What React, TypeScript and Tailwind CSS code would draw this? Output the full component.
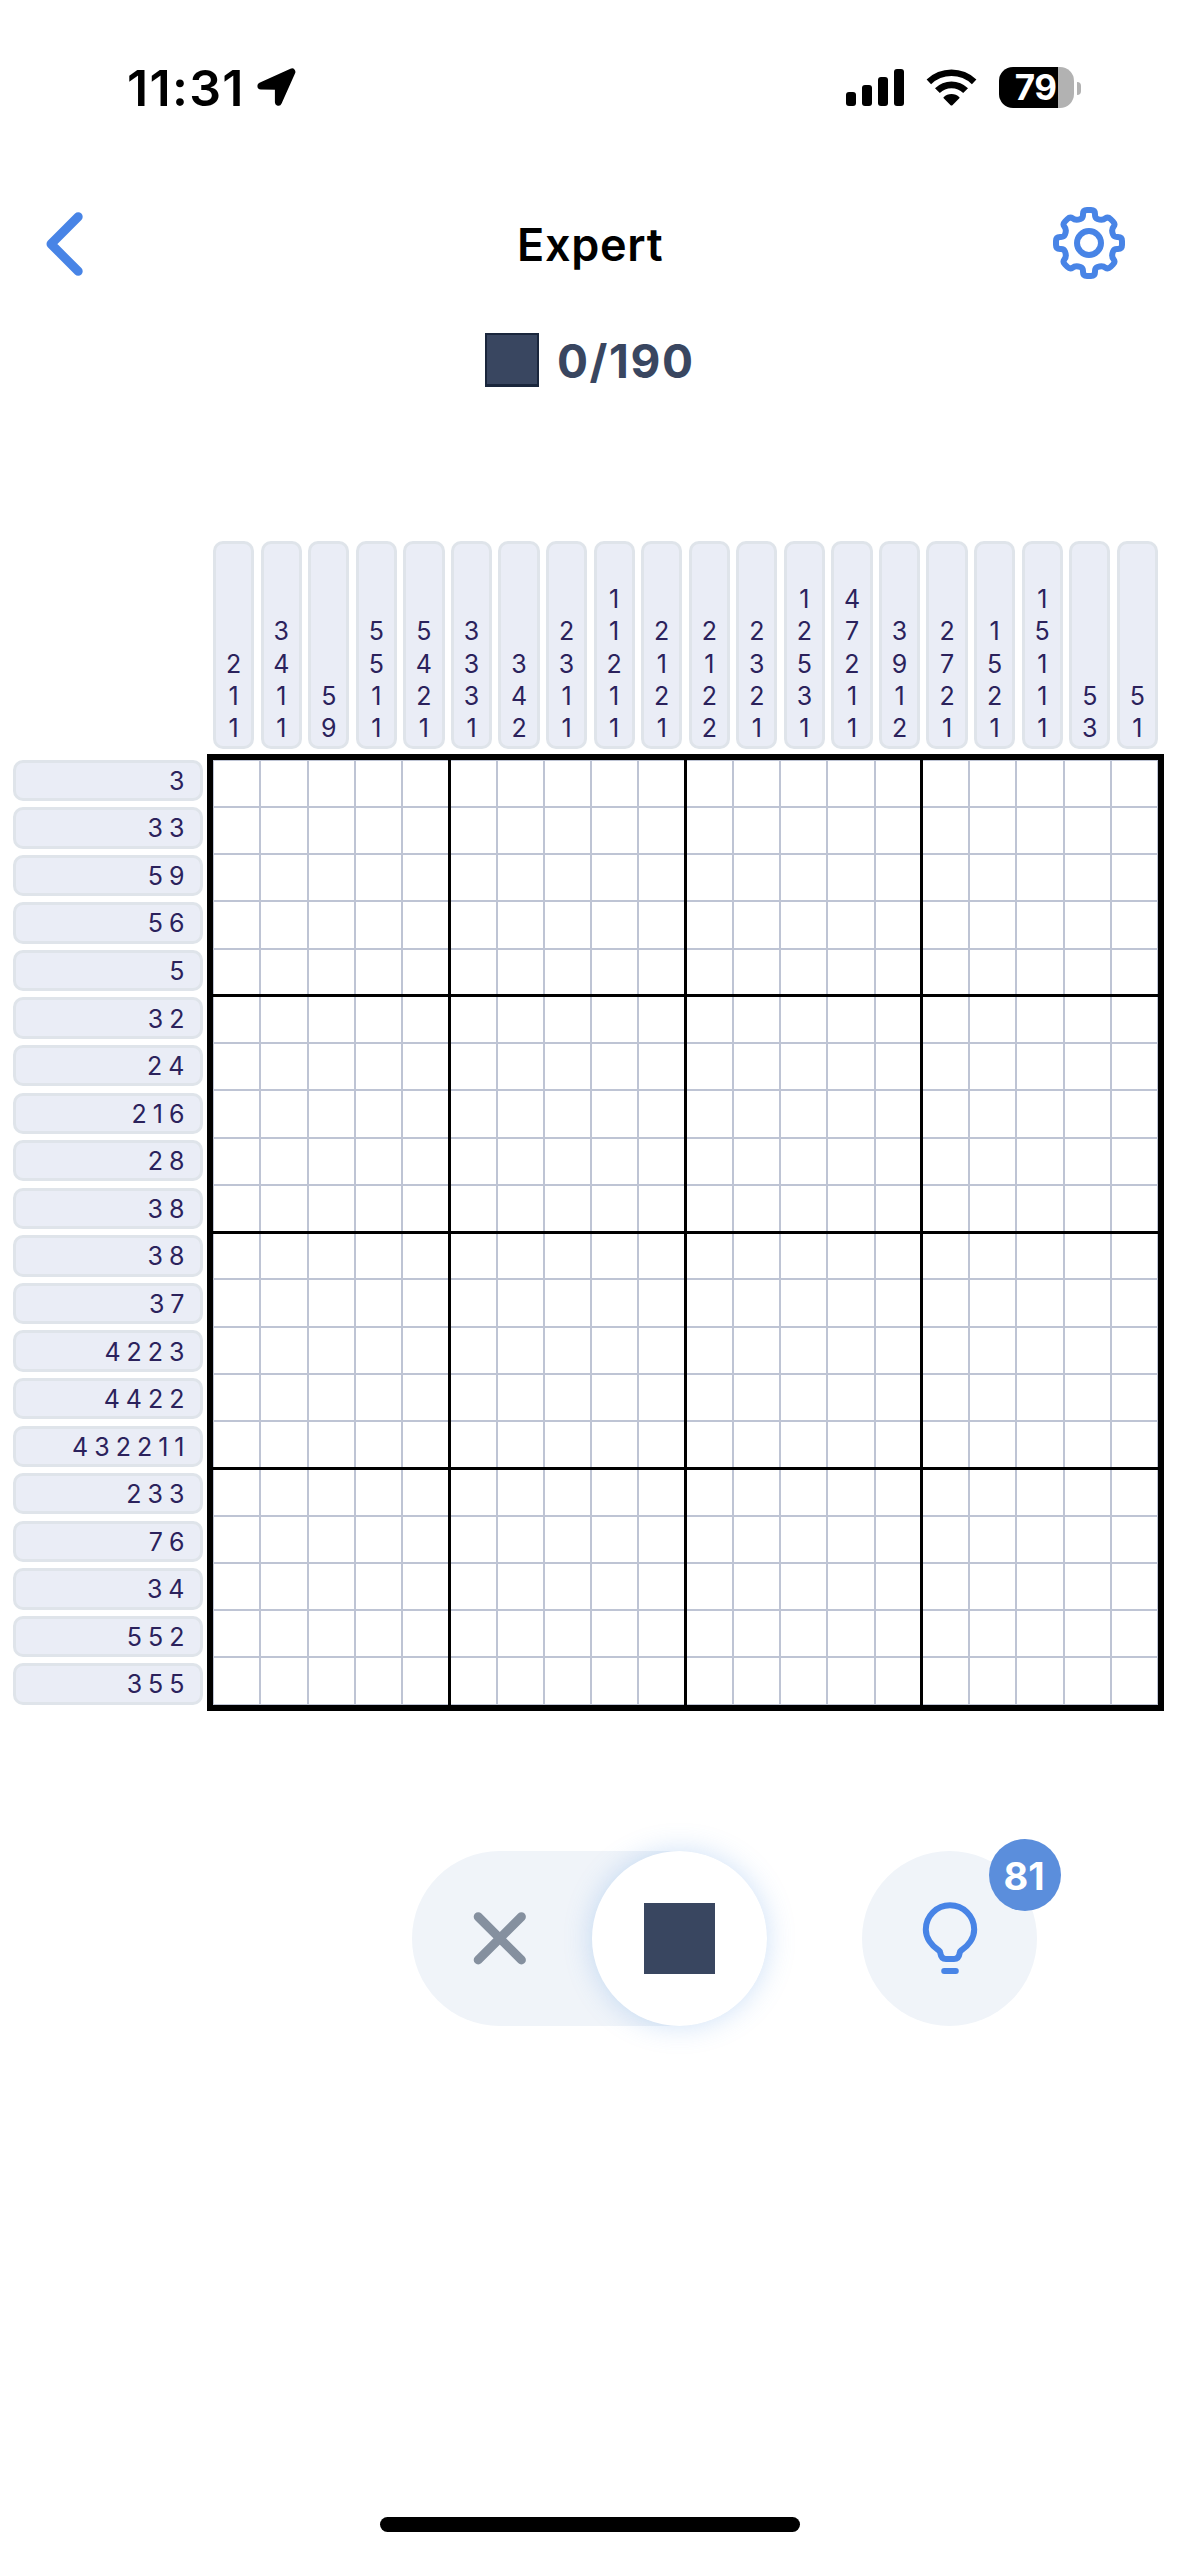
import React from "react";

const COLUMN_HINTS = [
  "211", "3411", "59", "5511", "5421", "3331", "342", "2311", "11211", "2121",
  "2122", "2321", "12531", "47211", "3912", "2721", "1521", "15111", "53", "51",
];

const ROW_HINTS = [
  "3", "33", "59", "56", "5", "32", "24", "216", "28", "38",
  "38", "37", "4223", "4422", "432211", "233", "76", "34", "552", "355",
];

const CELLS = Array.from({ length: 400 }, (_, i) => i);
const DIVIDERS = [5, 10, 15];
const CELL = 47.25;

function StatusBar() {
  return (
    <div className="flex h-[180px] items-start justify-between pr-[98px] pl-[127px]">
      <div className="flex pt-[60px]">
        <span className="w-[129px] text-[50px] leading-[56px] font-semibold tracking-[1.3px] whitespace-nowrap">11:31</span>
        <svg className="mt-[8px] h-[40px] w-[42px]" viewBox="0 0 42 40">
          <path
            d="M4.5 18.2 35.5 4.2 22 34.5V20.5Q22 18.5 20 18.5Z"
            fill="black"
            stroke="black"
            strokeWidth="7"
            strokeLinejoin="round"
            transform="translate(.4 -.3)"
          />
        </svg>
      </div>
      <div className="flex pt-[67px]">
        <div className="mt-[2px] flex h-[37px] items-end gap-[6px]">
          <span className="h-[14px] w-[10px] rounded-[3px] bg-black" />
          <span className="h-[21px] w-[10px] rounded-[3px] bg-black" />
          <span className="h-[29px] w-[10px] rounded-[3px] bg-black" />
          <span className="h-[37px] w-[10px] rounded-[3px] bg-black" />
        </div>
        <svg className="mt-[2px] ml-[22px] h-[37px] w-[51px]" viewBox="0 0 51 37">
          <path d="M0.6 10.6A35.6 35.6 0 0 1 50.4 10.6L45.9 15.3A29 29 0 0 0 5.1 15.3Z" />
          <path d="M9 19.2A23.4 23.4 0 0 1 42 19.2L37.2 24A16.6 16.6 0 0 0 13.8 24Z" />
          <path d="M17.6 28.2A11.2 11.2 0 0 1 33.4 28.2Q33.8 28.8 33.3 29.3L26.4 36.2Q25.5 37 24.6 36.2L17.7 29.3Q17.2 28.8 17.6 28.2Z" />
        </svg>
        <div className="ml-[22px] flex h-[41px] items-center">
          <div className="flex h-[41px] w-[75px] items-center justify-center rounded-[14px] bg-[linear-gradient(to_right,black_59px,#b2b2b2_59px)] pr-[2px]">
            <span className="text-[35px] leading-[41px] font-bold tracking-[-0.5px] text-white">79</span>
          </div>
          <span className="mt-px ml-[3px] h-[13px] w-[4px] rounded-r-full bg-[#b2b2b2]" />
        </div>
      </div>
    </div>
  );
}

function Header() {
  return (
    <div className="flex h-[126px] items-center pr-[51px] pl-[43px]">
      <svg className="h-[72px] w-[42px]" viewBox="0 0 42 72" fill="none">
        <path d="M35.2 9.7 8 37l27.2 27.3" stroke="#4884e6" strokeWidth="9" strokeLinecap="round" strokeLinejoin="round" />
      </svg>
      <h1 className="ml-[432px] pt-[3px] text-[45px] leading-[60px] font-semibold tracking-[0.7px]">Expert</h1>
      <svg className="ml-auto h-[78px] w-[78px]" viewBox="-39 -39 78 78" fill="none" stroke="#4884e6" strokeWidth="6" strokeLinejoin="round">
        <circle r="12" />
        <path d="M-6-28V-29Q-6-33-2-33H2Q6-33 6-29V-28Q6-25 8.5-24C11-23 14-22.500 16.500-24.700Q19-26.500 21.500-24L24-21.500Q26.500-19 24.700-16.500C22.500-14 23-11 24-8.500Q25-6 28-6H29Q33-6 33-2V2Q33 6 29 6H28Q25 6 24 8.500C23 11 22.500 14 24.700 16.500Q26.500 19 24 21.500L21.500 24Q19 26.500 16.500 24.700C14 22.500 11 23 8.500 24Q6 25 6 28V29Q6 33 2 33H-2Q-6 33-6 29V28Q-6 25-8.500 24C-11 23-14 22.500-16.500 24.700Q-19 26.500-21.500 24L-24 21.500Q-26.500 19-24.700 16.500C-22.500 14-23 11-24 8.500Q-25 6-28 6H-29Q-33 6-33 2V-2Q-33-6-29-6H-28Q-25-6-24-8.500C-23-11-22.500-14-24.700-16.500Q-26.500-19-24-21.500L-21.500-24Q-19-26.500-16.500-24.700C-14-22.500-11-23-8.500-24Q-6-25-6-28Z" />
      </svg>
    </div>
  );
}

function Counter() {
  return (
    <div className="flex h-[108px] items-center pl-[485px]">
      <span className="size-[54px] border-2 border-b-3 border-[#1a263c] bg-[#394660]" />
      <span className="pt-px pl-[18px] text-[46px] leading-[54px] font-bold tracking-[1.6px] whitespace-nowrap text-[#394660]">0/190</span>
    </div>
  );
}

function Board() {
  return (
    <div className="mt-[127px] pl-[13px]">
      <div className="ml-[200px] flex h-[208px] w-[945px] justify-between">
        {COLUMN_HINTS.map((hint, i) => (
          <div key={i} className="flex w-[41.3px] flex-col items-center justify-end rounded-[10px] border-3 border-[#dfe4ea] bg-[#eaedf6] pb-[1.5px]">
            {hint.split("").map((n, j) => (
              <span key={j} className="h-[32.3px] text-[25px] leading-[32.3px] text-[#2b225c]">{n}</span>
            ))}
          </div>
        ))}
      </div>
      <div className="mt-[4.67px] flex">
        <div className="mt-[6px] mr-[4px] flex h-[945px] w-[190px] flex-col justify-between">
          {ROW_HINTS.map((hint, i) => (
            <div key={i} className="flex h-[41.3px] items-center justify-end gap-[6px] rounded-[10px] border-3 border-[#dfe4ea] bg-[#eaedf6] pt-px pr-[15.5px]">
              {hint.split("").map((n, j) => (
                <span key={j} className="text-[25px] leading-[34px] text-[#2b225c]">{n}</span>
              ))}
            </div>
          ))}
        </div>
        <div className="relative grid grid-cols-[repeat(20,47.25px)] grid-rows-[repeat(20,47.25px)] border-6 border-black">
          {CELLS.map((i) => (
            <div key={i} className="border border-[#bec4d4]" />
          ))}
          {DIVIDERS.map((n) => (
            <React.Fragment key={n}>
              <div className="absolute inset-y-0 w-[3px] bg-black" style={{ left: n * CELL - 1.5 }} />
              <div className="absolute inset-x-0 h-[3px] bg-black" style={{ top: n * CELL - 1.5 }} />
            </React.Fragment>
          ))}
        </div>
      </div>
    </div>
  );
}

function Controls() {
  return (
    <div className="mt-[140.33px] flex pl-[412px]">
      <div className="flex h-[175px] w-[355px] items-center justify-between rounded-full bg-[#f0f4f9]">
        <svg className="ml-[58px] h-[60px] w-[60px]" viewBox="0 0 60 60">
          <path d="M8.200 8.700 51.400 51.900M51.400 8.700 8.200 51.900" stroke="#85909f" strokeWidth="9" strokeLinecap="round" />
        </svg>
        <div className="flex size-[175px] items-center justify-center rounded-full bg-white shadow-[0_0_28px_rgba(72,140,225,0.27)]">
          <span className="size-[71px] bg-[#394660]" />
        </div>
      </div>
      <div className="relative ml-[95px] flex size-[175px] items-center justify-center rounded-full bg-[#f0f4f9]">
        <svg className="mt-[2px] h-[90px] w-[90px]" viewBox="0 0 90 90" fill="none" stroke="#4884e6" strokeWidth="6" strokeLinejoin="round" strokeLinecap="round">
          <path d="M33.700 56.300C26.500 52 20.800 44 20.800 35.500A24.200 24.200 0 0 1 69.200 35.500C69.200 44 63.500 52 56.300 56.300Q54.900 57.300 54.700 59Q53.800 65 49 65H41Q36.200 65 35.300 59Q35.100 57.300 33.700 56.300Z" />
          <path d="M39.200 77H50.800" />
        </svg>
        <span className="absolute top-[-12px] left-[127px] flex size-[72px] items-center justify-center rounded-full bg-[#5b8edc] pt-[3px] pr-[2px] text-[38px] font-bold text-white">81</span>
      </div>
    </div>
  );
}

export default function App() {
  return (
    <div className="flex h-[2556px] w-[1179px] flex-col overflow-hidden bg-white font-['Inter',sans-serif] text-black">
      <StatusBar />
      <Header />
      <Counter />
      <Board />
      <Controls />
      <div className="mt-auto mb-[24px] h-[15px] w-[420px] self-center rounded-full bg-black" />
    </div>
  );
}
